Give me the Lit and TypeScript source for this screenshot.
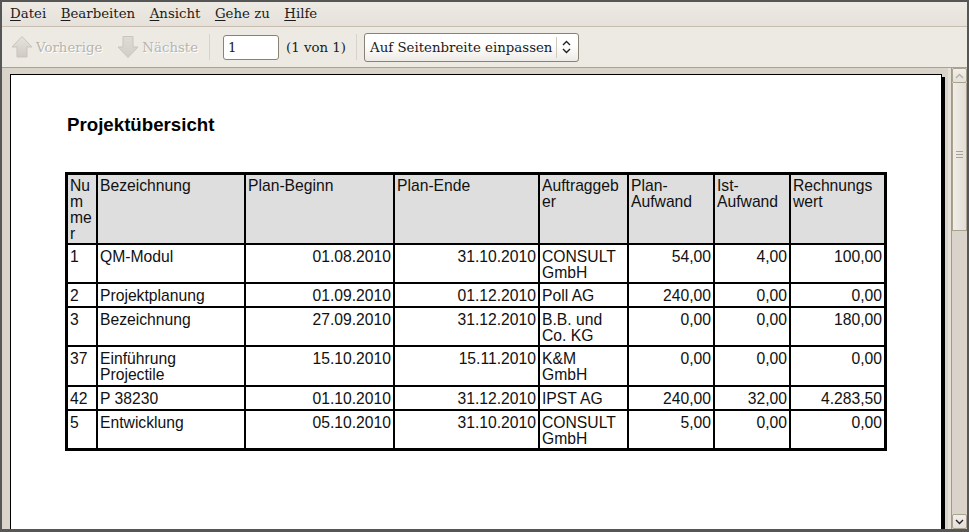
import { LitElement, html, css, svg } from "lit";
import { customElement } from "lit/decorators.js";

const HEAD_HTML = [
  html`Nu<br />m<br />me<br />r`, html`Bezeichnung`, html`Plan-Beginn`, html`Plan-Ende`,
  html`Auftraggeb<br />er`, html`Plan-<br />Aufwand`, html`Ist-<br />Aufwand`, html`Rechnungs<br />wert`,
];
const ROWS: [string, any, string, string, any, string, string, string, number][] = [
  ["1", "QM-Modul", "01.08.2010", "31.10.2010", html`CONSULT<br />GmbH`, "54,00", "4,00", "100,00", 39],
  ["2", "Projektplanung", "01.09.2010", "01.12.2010", "Poll AG", "240,00", "0,00", "0,00", 24],
  ["3", "Bezeichnung", "27.09.2010", "31.12.2010", html`B.B. und<br />Co. KG`, "0,00", "0,00", "180,00", 39],
  ["37", html`Einführung<br />Projectile`, "15.10.2010", "15.11.2010", html`K&amp;M<br />GmbH`, "0,00", "0,00", "0,00", 40],
  ["42", "P 38230", "01.10.2010", "31.12.2010", "IPST AG", "240,00", "32,00", "4.283,50", 24],
  ["5", "Entwicklung", "05.10.2010", "31.10.2010", html`CONSULT<br />GmbH`, "5,00", "0,00", "0,00", 37],
];
const COLS = [30, 148, 149, 145, 89, 86, 76, 93];
const RIGHT = [false, false, true, true, false, true, true, true];

const up = svg`<svg width="22" height="24" viewBox="0 0 22 24"><defs><linearGradient id="g1" x1="0" y1="0" x2="0" y2="1"><stop offset="0" stop-color="#e6e3dd"/><stop offset="1" stop-color="#cfcbc4"/></linearGradient></defs><path d="M11 1.5 L21 12 L16 12 L16 22 L6 22 L6 12 L1 12 Z" fill="url(#g1)" stroke="#c9c5bd"/></svg>`;
const down = svg`<svg width="22" height="24" viewBox="0 0 22 24"><defs><linearGradient id="g2" x1="0" y1="0" x2="0" y2="1"><stop offset="0" stop-color="#dedbd5"/><stop offset="1" stop-color="#d2cec7"/></linearGradient></defs><path d="M6 1.5 L16 1.5 L16 12 L21 12 L11 22.5 L1 12 L6 12 Z" fill="url(#g2)" stroke="#c9c5bd"/></svg>`;

@customElement("app-root")
export class AppRoot extends LitElement {
  static styles = css`
    :host { display: block; width: 969px; height: 532px; overflow: hidden; font-family: "DejaVu Serif", serif; }
    * { box-sizing: border-box; }
    .win { width: 969px; height: 532px; display: flex; flex-direction: column; background: #edeae3;
      border-top: 2px solid #565656; border-left: 2px solid #565656; border-right: 2px solid #565656; border-bottom: 3px solid #565656; }
    .menu { height: 25px; flex: none; display: flex; align-items: center; padding: 0 0 2px 8px; gap: 14.5px; font-size: 13.33px; color: #1c1c1c;
      background: linear-gradient(#edeae3, #e6e2db); border-bottom: 1px solid #c6beb0; }
    .menu u { text-underline-offset: 2px; }
    .tools { height: 40px; flex: none; display: flex; align-items: center; background: #edeae3; padding-left: 9px; font-size: 13.33px; color: #1c1c1c; }
    .tbtn { display: flex; align-items: center; gap: 3px; color: #b8b4ac; text-shadow: 1px 1px 0 #fff; }
    .tbtn.next { margin-left: 15px; }
    .sep { width: 1px; height: 26px; background: #d8d3ca; margin: 0 13px 0 11px; }
    .num { width: 56px; height: 25px; background: #fff; border: 1px solid #8a8273; border-radius: 3px; padding: 0 0 0 4px; display: flex; align-items: center; }
    .of { margin-left: 7px; }
    .sep2 { margin: 0 7px 0 10px; }
    .combo { width: 215px; height: 29px; border: 1px solid #8a8273; border-radius: 3px; background: linear-gradient(#fff 40%, #eeebe6);
      display: flex; align-items: center; padding-left: 5px; }
    .combo span { flex: 1; white-space: nowrap; }
    .combo .div { flex: none; width: 1px; height: 21px; background: #cfcac0; margin-right: 5px; }
    .combo svg { flex: none; margin-right: 7px; }
    .viewer { flex: 1; min-height: 0; display: flex; background: #d9d3c9; border-top: 1px solid #a9a290; }
    .area { flex: 1; min-width: 0; display: flex; padding: 6px 9px 0 8px; background: linear-gradient(90deg, #d9d3c9 calc(100% - 3px), #e6e1d8 0); border-right: 1px solid #a19a88; overflow: hidden; }
    .page { flex: 1; background: #fff; border-top: 1px solid #000; border-left: 1px solid #000; border-right: 1px solid #000; box-shadow: 3px 3px 0 #000; padding: 39px 0 0 54px; }
    h1 { margin: 0; font: bold 18.7px/21px "Liberation Sans", sans-serif; color: #000; height: 58px; padding-left: 2px; }
    table { border-collapse: separate; border-spacing: 0; table-layout: fixed; width: 822px; border: 3px solid #000; font: 15.7px/16px "Liberation Sans", sans-serif; color: #111; }
    td { vertical-align: top; padding: 4px 1px 0 2px; border-right: 2px solid #000; border-bottom: 2px solid #000; overflow: hidden; white-space: nowrap; }
    td:last-child { border-right: 0; }
    tbody tr:last-child td { border-bottom: 0; }
    td.r { text-align: right; padding-right: 2px; }
    thead td { background: #dedede; height: 70px; padding-top: 3px; }
    .bar { width: 15px; flex: none; display: flex; flex-direction: column; background: #d9d3c9; }
    .arrow { height: 15px; background: linear-gradient(#f2efea, #e4e0d8); border: 1px solid #a9a290; border-radius: 2px; display: flex; align-items: center; justify-content: center; flex: none; }
    .thumb { height: 148px; padding-bottom: 4px; background: linear-gradient(90deg, #f0ede7, #e2ded6); border: 1px solid #a9a290; border-top: 0; display: flex; align-items: center; justify-content: center; flex: none; }
    .trough { flex: 1; }
  `;

  render() {
    return html`<div class="win">
      <div class="menu">
        <span><u>D</u>atei</span><span><u>B</u>earbeiten</span><span><u>A</u>nsicht</span><span><u>G</u>ehe zu</span><span><u>H</u>ilfe</span>
      </div>
      <div class="tools">
        <div class="tbtn">${up}<span>Vorherige</span></div>
        <div class="tbtn next">${down}<span>Nächste</span></div>
        <div class="sep"></div>
        <div class="num">1</div>
        <span class="of">(1 von 1)</span>
        <div class="sep sep2"></div>
        <div class="combo"><span>Auf Seitenbreite einpassen</span><div class="div"></div>
          <svg width="9" height="14" viewBox="0 0 9 14" fill="none" stroke="#222" stroke-width="1.4"><path d="M1 5 L4.5 1.5 L8 5 M1 9 L4.5 12.5 L8 9"/></svg>
        </div>
      </div>
      <div class="viewer">
        <div class="area">
          <div class="page">
            <h1>Projektübersicht</h1>
            <table>
              <colgroup>${COLS.map((w) => html`<col style="width:${w}px" />`)}</colgroup>
              <thead><tr>${HEAD_HTML.map((h) => html`<td>${h}</td>`)}</tr></thead>
              <tbody>
                ${ROWS.map((r) => html`<tr style="height:${r[8]}px">${r.slice(0, 8).map((c, i) => html`<td class=${RIGHT[i] ? "r" : ""}>${c}</td>`)}</tr>`)}
              </tbody>
            </table>
          </div>
        </div>
        <div class="bar">
          <div class="arrow"><svg width="9" height="6" viewBox="0 0 9 6" fill="none" stroke="#b5b0a6" stroke-width="1.4"><path d="M1 5 L4.5 1.5 L8 5"/></svg></div>
          <div class="thumb"><svg width="9" height="8" viewBox="0 0 9 8" stroke="#a9a290"><path d="M1 .5H8M1 3.5H8M1 6.5H8"/></svg></div>
          <div class="trough"></div>
          <div class="arrow"><svg width="9" height="6" viewBox="0 0 9 6" fill="none" stroke="#222" stroke-width="1.4"><path d="M1 1 L4.5 4.5 L8 1"/></svg></div>
        </div>
      </div>
    </div>`;
  }
}
